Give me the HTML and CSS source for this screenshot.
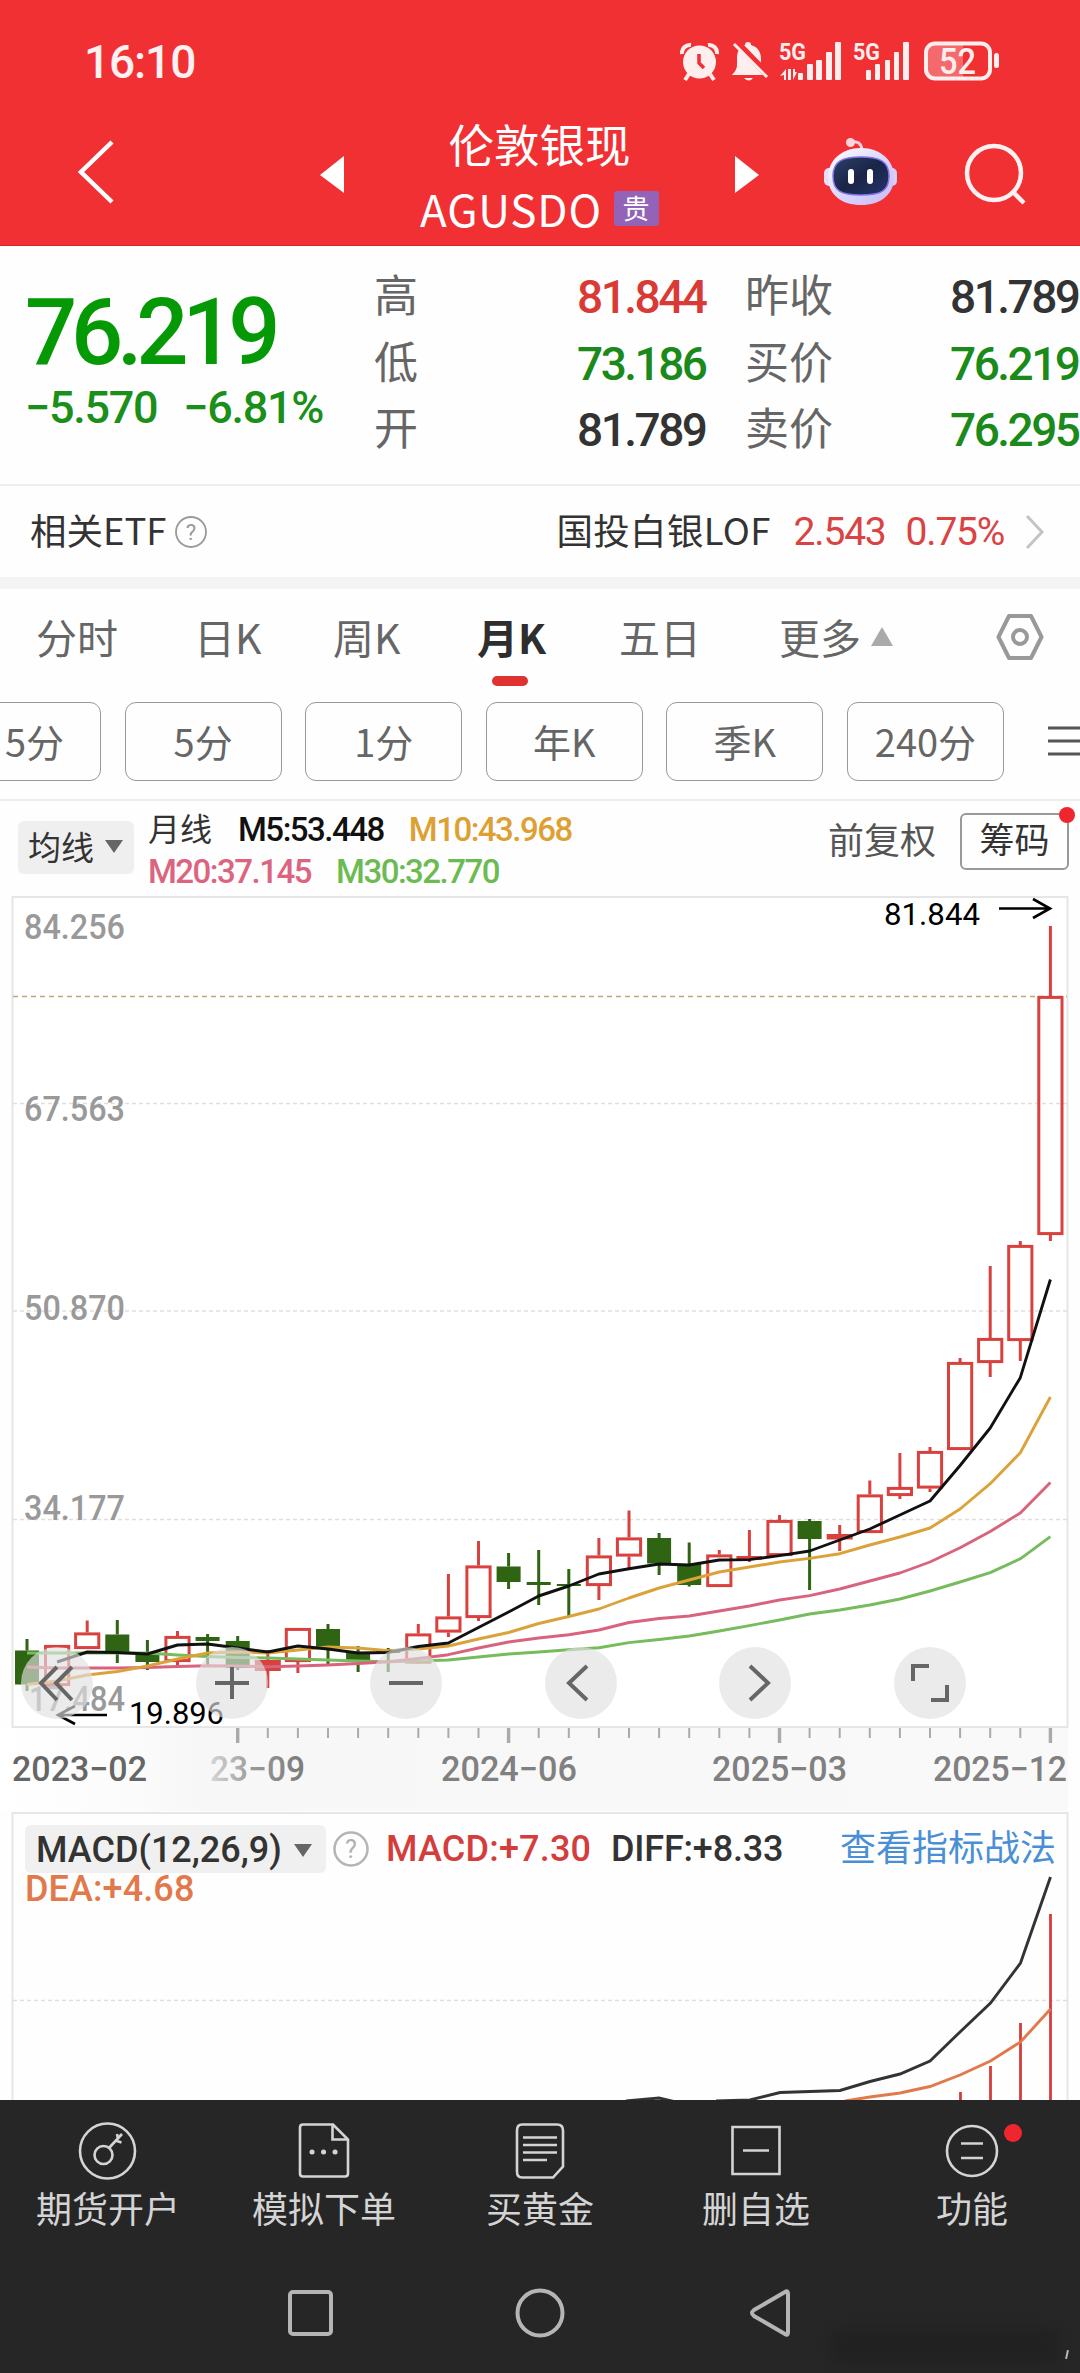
FILE: index.html
```html
<!DOCTYPE html>
<html lang="zh-CN">
<head>
<meta charset="utf-8">
<title>伦敦银现 AGUSDO</title>
<link rel="stylesheet" href="styles.css">
</head>
<body>
<main class="screen">
  <header class="header">
    <div class="status">
      <span class="status-time">16:10</span>
      <svg class="status-icons" width="344" height="60" viewBox="680 30 344 60">
        <g fill="#ffeeee">
          <circle cx="699.500" cy="62" r="16.500"/>
          <path d="M682 54a8 8 0 0 1 9-9M708 45a8 8 0 0 1 9 9" fill="none" stroke="#ffeeee" stroke-width="4"/>
          <path d="M689 74l-4 6M710 74l4 6" stroke="#ffeeee" stroke-width="4"/>
          <path d="M699 54v9l5 5" fill="none" stroke="#f13034" stroke-width="3.500"/>
          <path d="M748 42c2 0 3 1 3 3 7 2 10 7 10 14v7l5 9h-34c4-5 5-6 5-11v-6c0-7 3-11 8-13 0-2 1-3 3-3zM744 78h9q-4 5-9 0z"/>
          <path d="M736 42l32 33" stroke="#f13034" stroke-width="7"/>
          <path d="M734 44l33 33" stroke="#ffeeee" stroke-width="3"/>
          <path d="M780 76l6-7v11h-2v-5zM793 69v11l4-8h-2v-3zM788 69h3v11h-3z"/>
          <rect x="798" y="73" width="5" height="7" rx="1"/><rect x="807" y="64" width="6" height="16" rx="1"/><rect x="816" y="60" width="6" height="20" rx="1"/><rect x="826" y="52" width="6" height="28" rx="1"/><rect x="835" y="42" width="6" height="38" rx="1"/>
          <rect x="866" y="70" width="5" height="10" rx="1"/><rect x="875" y="64" width="5" height="16" rx="1"/><rect x="885" y="60" width="5" height="20" rx="1"/><rect x="894" y="52" width="5" height="28" rx="1"/><rect x="903" y="42" width="6" height="38" rx="1"/>
          <text x="779" y="60" class="sig" textLength="27" lengthAdjust="spacingAndGlyphs">5G</text>
          <text x="853" y="60" class="sig" textLength="27" lengthAdjust="spacingAndGlyphs">5G</text>
          <path d="M932 44h31v33h-31q-5 0-5-6V50q0-6 5-6z" opacity=".3"/>
          <rect x="926" y="43.500" width="64" height="35" rx="9" fill="none" stroke="#ffeeee" stroke-width="4"/>
          <rect x="994" y="53" width="5" height="15" rx="2.500"/>
          <text x="939" y="74" class="batt" textLength="37" lengthAdjust="spacingAndGlyphs">52</text>
        </g>
      </svg>
    </div>
    <div class="nav">
      <svg class="nav-back" width="40" height="68" viewBox="0 0 40 68"><path d="M36 4L5 34l31 30" fill="none" stroke="#fff" stroke-width="4.500"/></svg>
      <svg class="nav-prev" width="24" height="38" viewBox="0 0 24 38"><path d="M24 0v37L0 19z" fill="#fff"/></svg>
      <div class="title">
        <div class="title-name">伦敦银现</div>
        <div class="title-code"><span>AGUSDO</span><b class="badge">贵</b></div>
      </div>
      <svg class="nav-next" width="24" height="38" viewBox="0 0 24 38"><path d="M0 0v37l24-18z" fill="#fff"/></svg>
      <svg class="nav-bot" width="76" height="72" viewBox="823 136 76 72">
        <defs>
          <linearGradient id="shell" x1="0" y1="0" x2="1" y2="1"><stop offset="0" stop-color="#fff"/><stop offset=".55" stop-color="#d9d5ff"/><stop offset="1" stop-color="#c9b8f2"/></linearGradient>
          <linearGradient id="visor" x1="0" y1="0" x2="1" y2="1"><stop offset="0" stop-color="#2b4068"/><stop offset=".5" stop-color="#1a2547"/><stop offset="1" stop-color="#25346c"/></linearGradient>
        </defs>
        <path d="M851 142q10-2 11 8" fill="none" stroke="#f7cfe0" stroke-width="3"/>
        <circle cx="850.500" cy="142.500" r="4.500" fill="#f9d5e2"/>
        <rect x="824" y="168" width="12" height="18" rx="5" fill="#e8dcf8"/><rect x="885" y="168" width="12" height="18" rx="5" fill="#dccdf5"/>
        <path d="M861 148c20 0 33 13 33 29 0 18-14 28-33 28s-33-10-33-28c0-16 13-29 33-29z" fill="url(#shell)"/>
        <path d="M861 157c18 0 28 4 28 19s-8 19-28 19-28-4-28-19 10-19 28-19z" fill="url(#visor)" stroke="#7f73e6" stroke-width="1.500"/>
        <rect x="848" y="169" width="6" height="15" rx="3" fill="#fff"/><rect x="867" y="169" width="6" height="15" rx="3" fill="#fff"/>
      </svg>
      <svg class="nav-search" width="64" height="64" viewBox="963 142 64 64"><circle cx="994" cy="173" r="27" fill="none" stroke="#fff1f1" stroke-width="4.500"/><path d="M1013 192l11 11" stroke="#fff1f1" stroke-width="4.500"/></svg>
    </div>
  </header>

  <section class="quote">
    <div class="quote-main">
      <div class="price num">76.219</div>
      <div class="change num"><span>−5.570</span><span class="pct">−6.81%</span></div>
    </div>
    <dl class="stats left">
      <div><dt>高</dt><dd class="num up">81.844</dd></div>
      <div><dt>低</dt><dd class="num down">73.186</dd></div>
      <div><dt>开</dt><dd class="num">81.789</dd></div>
    </dl>
    <dl class="stats right">
      <div><dt>昨收</dt><dd class="num">81.789</dd></div>
      <div><dt>买价</dt><dd class="num down">76.219</dd></div>
      <div><dt>卖价</dt><dd class="num down">76.295</dd></div>
    </dl>
  </section>

  <section class="etf">
    <span>相关ETF</span>
    <svg class="etf-help" width="34" height="34" viewBox="0 0 34 34"><circle cx="17" cy="17" r="15" fill="none" stroke="#999" stroke-width="1.800"/><text x="17" y="24.500" text-anchor="middle" class="help-mark">?</text></svg>
    <span class="etf-name">国投白银LOF</span>
    <span class="etf-val num">2.543</span>
    <span class="etf-pct num">0.75%</span>
    <svg class="etf-go" width="20" height="36" viewBox="0 0 20 36"><path d="M2 2l15 16L2 34" fill="none" stroke="#c4c4c4" stroke-width="3"/></svg>
  </section>

  <nav class="tabs">
    <span class="tab t1">分时</span><span class="tab t2">日K</span><span class="tab t3">周K</span><span class="tab t4 active">月K</span><span class="tab t5">五日</span>
    <span class="tab t6">更多<svg width="22" height="19" viewBox="0 0 22 19"><path d="M11 0l11 19H0z" fill="#aaa"/></svg></span>
    <svg class="gear" width="52" height="50" viewBox="0 0 52 50"><path d="M15 4h22l10.500 21L37 46H15L4.500 25z" fill="none" stroke="#999" stroke-width="4" stroke-linejoin="round"/><circle cx="26" cy="25" r="7" fill="none" stroke="#999" stroke-width="4"/></svg>
  </nav>

  <div class="chips">
    <span class="chip first">5分</span><span class="chip">5分</span><span class="chip">1分</span><span class="chip">年K</span><span class="chip">季K</span><span class="chip">240分</span>
    <svg class="menu" width="33" height="34" viewBox="0 0 33 34"><path d="M0 4h33M0 17h33M0 30h33" stroke="#555" stroke-width="3"/></svg>
  </div>

  <section class="ma">
    <div class="ma-pick">均线<svg width="18" height="13" viewBox="0 0 18 13"><path d="M0 0h18L9 13z" fill="#666"/></svg></div>
    <div class="ma-list">
      <div class="ma-row"><span class="ma-title">月线</span><span class="num m5">M5:53.448</span><span class="num m10">M10:43.968</span></div>
      <div class="ma-row"><span class="num m20">M20:37.145</span><span class="num m30">M30:32.770</span></div>
    </div>
    <span class="adjust">前复权</span>
    <span class="chouma">筹码<i class="dot"></i></span>
  </section>

  <section class="chart">
    <svg id="kline" width="1080" height="915" viewBox="0 896 1080 915">
      <defs>
        <linearGradient id="axisbg"><stop offset="0" stop-color="#fff"/><stop offset=".13" stop-color="#fbfbfb"/><stop offset=".19" stop-color="#f7f7f7"/><stop offset="1" stop-color="#f9f9f9"/></linearGradient>
        <linearGradient id="fade" gradientUnits="userSpaceOnUse" x1="205" y1="0" x2="300" y2="0"><stop offset="0" stop-color="#ddd"/><stop offset=".5" stop-color="#999"/><stop offset="1" stop-color="#7d7d7d"/></linearGradient>
      </defs>
      <rect x="0" y="1728" width="1068" height="83" fill="url(#axisbg)"/>
      <rect x="12.500" y="897" width="1055" height="830" fill="#fff" stroke="#e6e6e6" stroke-width="2"/>
      <path d="M13 1103.500H1067M13 1311H1067M13 1519.500H1067" stroke="#dfdfdf" stroke-width="1.300" stroke-dasharray="4 3"/>
      <path d="M13 996.500H1067" stroke="#bfa77a" stroke-width="1.500" stroke-dasharray="5 4"/>
      <g class="ylab">
        <text x="24" y="938.500" textLength="101" lengthAdjust="spacingAndGlyphs">84.256</text>
        <text x="24" y="1120.500" textLength="101" lengthAdjust="spacingAndGlyphs">67.563</text>
        <text x="24" y="1320" textLength="101" lengthAdjust="spacingAndGlyphs">50.870</text>
        <text x="24" y="1520" textLength="101" lengthAdjust="spacingAndGlyphs">34.177</text>
        <text x="29" y="1710.500" textLength="96" lengthAdjust="spacingAndGlyphs">17.484</text>
      </g>
      <g id="candles"></g>
      <g id="lines" fill="none" stroke-width="2.900" stroke-linejoin="round"></g>
      <g class="mark">
        <text x="884" y="925" textLength="96" lengthAdjust="spacingAndGlyphs">81.844</text>
        <text x="129" y="1723.500" textLength="95" lengthAdjust="spacingAndGlyphs">19.896</text>
        <path d="M999 908.500H1050M1033 899l17 9.500-17 9.500M107 1715H58M75 1706l-17 9 17 9" fill="none" stroke="#000" stroke-width="2.600"/>
      </g>
      <g id="ticks" stroke="#aaa"></g>
      <g class="xlab">
        <text x="12" y="1781" textLength="135" lengthAdjust="spacingAndGlyphs" fill="#666">2023−02</text>
        <text x="210" y="1781" textLength="95" lengthAdjust="spacingAndGlyphs" fill="url(#fade)">23−09</text>
        <text x="441" y="1781" textLength="136" lengthAdjust="spacingAndGlyphs">2024−06</text>
        <text x="712" y="1781" textLength="135" lengthAdjust="spacingAndGlyphs">2025−03</text>
        <text x="933" y="1781" textLength="134" lengthAdjust="spacingAndGlyphs">2025−12</text>
      </g>
    </svg>
    <div class="tools">
      <svg viewBox="-36 -36 72 72"><path d="M0-16L-16 0 0 17M15-16L-1 0 15 17"/></svg>
      <svg viewBox="-36 -36 72 72"><path d="M-17 0H17M0-16V16"/></svg>
      <svg viewBox="-36 -36 72 72"><path d="M-17 0H17"/></svg>
      <svg viewBox="-36 -36 72 72"><path d="M6-17L-12 0 6 17"/></svg>
      <svg viewBox="-36 -36 72 72"><path d="M-5-17L13 0-5 17"/></svg>
      <svg viewBox="-36 -36 72 72"><path d="M-1-17H-17V-2M1 17H17V2"/></svg>
    </div>
  </section>

  <section class="macd">
    <svg class="macd-plot" width="1080" height="289" viewBox="0 1811 1080 289">
      <path d="M12.500 2101V1813H1067.500V2101" fill="none" stroke="#e6e6e6" stroke-width="2"/>
      <path d="M13 2000.500H1067" stroke="#dfdfdf" stroke-width="1.300" stroke-dasharray="4 3"/>
      <path d="M960.500 2092V2101M990.500 2066V2101M1020.500 2023V2101M1050.500 1914V2101" stroke="#d33e3c" stroke-width="2.800"/>
      <path d="M845 2101L870 2097 900 2093 930 2086.500 960 2075 990.500 2061 1020.500 2042 1050.500 2009" fill="none" stroke="#e2794a" stroke-width="2.900"/>
      <path d="M626 2101L659 2098 676 2102M716 2101L750 2100 780 2092.500 840 2090.500 870 2081.500 900 2074 930 2061 960 2032 990.500 2003 1020.500 1963 1050.500 1877" fill="none" stroke="#333" stroke-width="2.900"/>
    </svg>
    <div class="macd-head">
      <div class="macd-pick num"><span>MACD(12,26,9)</span><svg width="18" height="13" viewBox="0 0 18 13"><path d="M0 0h18L9 13z" fill="#666"/></svg></div>
      <svg class="macd-help" width="38" height="38" viewBox="0 0 38 38"><circle cx="19" cy="19" r="16.500" fill="none" stroke="#b5b5b5" stroke-width="2.500"/><text x="19" y="27.500" text-anchor="middle" class="help-mark big">?</text></svg>
      <span class="num macd-v">MACD:+7.30</span>
      <span class="num diff-v">DIFF:+8.33</span>
      <span class="macd-link">查看指标战法</span>
      <span class="num dea-v">DEA:+4.68</span>
    </div>
  </section>

  <footer class="footer">
    <div class="actions">
      <div class="action"><svg width="60" height="60" viewBox="78 2121 60 60"><circle cx="107.500" cy="2151" r="27.500"/><circle cx="103.500" cy="2155" r="9"/><path d="M109 2148l13-14M115.500 2140.500l6 2M117 2134l1 5"/></svg><span>期货开户</span></div>
      <div class="action"><svg width="60" height="60" viewBox="294 2121 60 60"><path d="M333 2124.500h-30q-3 0-3 3v46q0 3 3 3h42q3 0 3-3v-34zM332.500 2124v15.500H348"/><path d="M312 2152h.1M323.500 2152h.1M335 2152h.1" stroke-width="5" stroke-linecap="round"/></svg><span>模拟下单</span></div>
      <div class="action"><svg width="60" height="60" viewBox="510 2121 60 60"><path d="M522 2124.500h35q6 0 6 6v36l-10 11h-31q-5 0-5-6v-41q0-6 5-6zM523 2137.500h34M523 2145h34M523 2152.500h34M523 2160h24"/></svg><span>买黄金</span></div>
      <div class="action"><svg width="60" height="60" viewBox="725 2121 60 60"><path d="M731.500 2127h47v47h-47zM742 2150.500h26"/></svg><span>删自选</span></div>
      <div class="action"><svg width="60" height="60" viewBox="941 2121 60 60"><circle cx="971" cy="2151" r="25"/><path d="M960 2143.500h22M960 2158h22"/></svg><span>功能</span><i class="dot"></i></div>
    </div>
    <div class="sysnav">
      <svg width="50" height="54" viewBox="-25 -27 50 54"><rect x="-20" y="-21" width="41" height="42" rx="3"/></svg>
      <svg width="50" height="54" viewBox="-25 -27 50 54"><circle r="22.500"/></svg>
      <svg width="50" height="54" viewBox="-25 -27 50 54"><path d="M18-19v38q0 4-3 2L-16 3q-4-3 0-6L15-21q3-2 3 2z"/></svg>
      <i class="smudge"></i><i class="fleck"></i>
    </div>
  </footer>
</main>
<script src="chart.js"></script>
</body>
</html>
```

FILE: styles.css
```css
* { box-sizing: border-box; }
body {
  margin: 0;
  background: #fefefe;
  color: #333;
  font-family: Roboto, "Noto Sans CJK SC", sans-serif;
}
svg { display: block; flex: none; }
dl, dd { margin: 0; }
.screen { width: 1080px; height: 2373px; overflow: hidden; display: flex; flex-direction: column; }
.screen > * { flex: none; }
.num { font-family: Roboto, sans-serif; font-weight: 500; white-space: nowrap; }
.up { color: #d93a35; }
.down { color: #1a8a1a; }
.dot { position: absolute; border-radius: 50%; background: #f0262f; }

/* header */
.header { height: 246px; background: #f13034; color: #fff; border-bottom: 1px solid #d9262b; }
.status { height: 108px; padding: 30px 56px 0 84px; display: flex; justify-content: space-between; }
.status-time { margin-top: 10px; font-size: 46px; line-height: 44px; font-weight: 500; letter-spacing: -1.100px; color: #fff1f1; }
.sig { font: 700 24px Roboto, sans-serif; }
.batt { font: 500 36px Roboto, sans-serif; }
.nav { display: flex; padding-left: 76px; }
.nav-back { margin-top: 30px; }
.nav-prev { margin: 48px 0 0 204px; }
.title { width: 391px; display: flex; flex-direction: column; align-items: center; }
.title-name { margin-top: 9px; font: 400 45.500px/52px "Noto Sans CJK SC", sans-serif; }
.title-code { display: flex; align-items: center; gap: 12px; margin-top: 12px; font: 400 44px/54px "Noto Sans CJK SC", sans-serif; letter-spacing: .8px; }
.badge { width: 45px; height: 35px; border-radius: 3px; background: #9263b6; font-size: 27px; font-weight: 400; line-height: 34px; text-align: center; }
.nav-next { margin-top: 48px; }
.nav-bot { margin: 28px 0 0 64px; }
.nav-search { margin: 34px 0 0 64px; }

/* quote */
.quote { height: 240px; display: flex; border-bottom: 2px solid #eee; }
.quote-main { width: 374px; padding: 37px 0 0 25px; }
.price { font-size: 92px; line-height: 100px; letter-spacing: -6.300px; color: #059a05; }
.change { font-size: 45px; line-height: 50px; letter-spacing: -1.300px; color: #1a8f1a; display: flex; }
.pct { margin-left: 26px; }
.stats { padding-top: 18px; font-size: 44px; color: #666; }
.stats > div { display: flex; justify-content: space-between; height: 66.500px; line-height: 66px; }
.stats dd { font-size: 46px; letter-spacing: -2.500px; margin-right: .5px; }
.stats dd:not(.up):not(.down) { color: #333; }
.stats.left { width: 332px; }
.stats.right { width: 334px; margin-left: 39px; }

/* related fund */
.etf { height: 103px; padding: 0 0 4px 30px; display: flex; align-items: center; font-size: 36.500px; line-height: 50px; border-bottom: 12px solid #f4f4f4; font-family: "Noto Sans CJK SC", sans-serif; }
.etf > span { white-space: nowrap; }
.etf > svg, .etf > .num { position: relative; top: 2px; }
.etf-help { margin-left: 7px; }
.help-mark { font: 400 22px Roboto, sans-serif; fill: #999; }
.help-mark.big { font-size: 25px; fill: #b0b0b0; }
.etf-name { margin-left: 349px; letter-spacing: .3px; }
.etf-val, .etf-pct { color: #d94343; font-size: 39px; letter-spacing: -1.200px; font-weight: 400; }
.etf-val { margin-left: 23px; }
.etf-pct { margin-left: 20px; }
.etf-go { margin-left: 21px; }

/* period tabs */
.tabs { height: 113px; padding: 17px 0 0 36px; display: flex; align-items: flex-start; font-size: 41px; line-height: 60px; color: #666; font-family: "Noto Sans CJK SC", sans-serif; }
.tab { flex: none; position: relative; white-space: nowrap; }
.t1 { width: 158px; } .t2 { width: 139px; } .t3 { width: 144px; } .t4 { width: 142px; } .t5 { width: 160px; }
.t6 { width: 215px; display: flex; align-items: center; gap: 10px; }
.active { color: #2e2e2e; font-weight: 700; }
.active::after { content: ""; position: absolute; left: 15px; top: 70px; width: 36px; height: 10px; border-radius: 5px; background: #e03331; }
.gear { margin-top: 6px; }

/* period chips */
.chips { height: 99px; display: flex; gap: 23.600px; margin-left: -56px; padding-bottom: 20px; border-bottom: 2px solid #eee; }
.chip { flex: none; width: 157px; height: 79px; border: 1.500px solid #999; border-radius: 11px; text-align: center; font: 400 38px/76px "Noto Sans CJK SC", sans-serif; color: #666; }
.chip.first { text-align: right; padding-right: 36px; }
.menu { margin: 22px 0 0 20px; }

/* moving averages */
.ma { height: 95px; display: flex; padding-left: 18px; }
.ma-pick { flex: none; margin-top: 20px; width: 116px; height: 53px; border-radius: 6px; background: #efefef; display: flex; align-items: center; gap: 11px; padding: 0 0 3px 10px; font-size: 33px; }
.ma-list { flex: none; width: 500px; padding: 8px 0 0 14px; font-size: 33px; letter-spacing: -1.500px; }
.ma-row { height: 41.500px; line-height: 42px; display: flex; gap: 25px; }
.ma-title { letter-spacing: 0; font-size: 32px; margin-right: 1px; }
.m5 { color: #111; } .m10 { color: #dda033; } .m20 { color: #dc6480; } .m30 { color: #6cbb52; }
.adjust { flex: none; margin: 16px 0 0 194px; width: 132px; font-size: 36px; line-height: 50px; color: #555; }
.chouma { flex: none; position: relative; margin-top: 12px; width: 109px; height: 57px; border: 2px solid #999; border-radius: 6px; font-size: 35px; line-height: 53px; text-align: center; }
.chouma .dot { right: -8px; top: -8px; width: 16px; height: 16px; }

/* candlestick chart */
.chart { position: relative; height: 915px; }
.ylab text { font: 500 34.500px Roboto, sans-serif; fill: #999; }
.xlab text { font: 500 34.500px Roboto, sans-serif; }
.xlab { fill: #808080; }
.mark text { font: 400 31px Roboto, sans-serif; fill: #000; }
.tools { position: absolute; left: 21px; top: 751px; display: flex; gap: 102.500px; }
.tools svg { width: 72px; height: 72px; border-radius: 50%; background: rgba(225, 225, 225, .65); fill: none; stroke: #666; stroke-width: 4; }

/* indicator */
.macd { height: 289px; display: grid; overflow: hidden; }
.macd-plot, .macd-head { grid-area: 1 / 1; }
.macd-head { display: flex; flex-wrap: wrap; align-content: flex-start; align-items: center; padding: 13px 0 0 25px; font-size: 36px; line-height: 50px; }
.macd-pick { position: relative; width: 301px; height: 48px; border-radius: 6px; background: #f0f0f0; display: flex; align-items: center; justify-content: space-between; padding: 2px 14px 0 11px; }
.macd-help { margin-left: 6px; }
.macd-v { margin-left: 16px; width: 225px; color: #d33e3c; letter-spacing: .2px; }
.diff-v { width: 229px; letter-spacing: -.2px; }
.macd-link { color: #4a8fd6; font-size: 36px; }
.dea-v { width: 100%; margin-top: -10px; color: #e2794a; letter-spacing: .1px; }

/* bottom bars */
.footer { height: 273px; background: #262626; color: #d4d4d4; }
.actions { display: flex; height: 160px; padding-top: 21px; }
.action { position: relative; width: 216px; display: flex; flex-direction: column; align-items: center; font: 400 36px/52px "Noto Sans CJK SC", sans-serif; }
.action svg { fill: none; stroke: #d4d4d4; stroke-width: 2.600; }
.action .dot { left: 140px; top: 3px; width: 18px; height: 18px; }
.sysnav { position: relative; display: flex; justify-content: center; gap: 180px; padding-top: 26px; }
.sysnav svg { fill: none; stroke: #b5b5b5; stroke-width: 4; }
.smudge { position: absolute; left: 830px; top: 68px; width: 230px; height: 36px; border-radius: 12px; background: #1f1f1f; filter: blur(6px); opacity: .6; }
.fleck { position: absolute; left: 1066px; top: 90px; width: 2px; height: 9px; background: #bbb; transform: rotate(12deg); }
```

FILE: chart.js
```js
const NS = "http://www.w3.org/2000/svg";
const RED = "#d8413e", GREEN = "#2f6412";
const x = i => 27 + i * 30.1;

function add(parent, tag, attrs) {
  const el = document.createElementNS(NS, tag);
  for (const k in attrs) el.setAttribute(k, attrs[k]);
  document.getElementById(parent).appendChild(el);
}

// kind (r = hollow rise, f = filled rise, g = fall), body top, body bottom, high, low
const candles = [
  ["g",1650.5,1684.5,1639,1691],["r",1645,1686,1645,1686],["r",1632.5,1649,1620.5,1649],["g",1634.5,1652,1620,1663],
  ["g",1654,1662,1640,1670],["r",1636,1662,1631,1665],["g",1637,1641,1634,1667],["g",1641,1668,1636,1670],
  ["f",1660,1671,1650,1688],["r",1628,1662,1628,1673],["g",1629,1648,1624,1664],["g",1652,1661,1646,1672],
  ["g",1650,1653,1648,1672],["r",1633.5,1663.5,1624,1663],["r",1616.5,1632.5,1574,1637],["r",1565.5,1618,1541,1621],
  ["g",1566.5,1582,1553,1589],["g",1582,1585,1550,1605],["g",1584,1586,1569,1616],["r",1555.5,1586,1538,1600],
  ["r",1537.5,1556.5,1510.5,1569.5],["g",1538,1563.5,1533,1575],["g",1564,1585,1542.5,1586.5],["r",1554.5,1587,1550,1587],
  ["f",1556,1560,1530,1562],["r",1520,1556,1515,1556],["g",1521,1539,1519,1590],["f",1534,1539.5,1525,1551],
  ["r",1494.5,1533,1480.5,1533],["r",1487,1496,1453,1499],["r",1451,1488.5,1447,1492],["r",1362,1450,1358,1450],
  ["r",1338,1363,1266,1377],["r",1245,1341,1241,1361],["r",996,1235,926,1241]
];
candles.forEach(([kind, top, bottom, high, low], i) => {
  const color = kind === "g" ? GREEN : RED, w = kind === "g" ? 24 : 26;
  add("candles", "path", { d: `M${x(i)} ${high}V${top}M${x(i)} ${bottom}V${low}`, stroke: color, "stroke-width": 3 });
  if (kind === "r") {
    add("candles", "rect", { x: x(i) - 11.6, y: top + 1.4, width: 23.2, height: bottom - top - 2.8, fill: "none", stroke: color, "stroke-width": 3 });
  } else {
    add("candles", "rect", { x: x(i) - w / 2, y: top, width: w, height: bottom - top, fill: color });
  }
});

const averages = {
  "#76bb5c": [1653,1653,1653,1653,1653,1655,1656.5,1657.5,1658,1659,1660,1661,1661.7,1661,1660,1657,1654,1652,1649.8,1647.8,1642.6,1639.5,1636,1631,1625.6,1620,1614,1610,1605,1599,1591,1582,1572.6,1558.8,1536.7],
  "#d9637c": [1667,1668,1668,1668,1667.5,1666.5,1665.7,1666,1666.7,1666,1665,1663.5,1661.7,1658.5,1654.7,1648,1642,1638,1634.7,1630,1622.5,1618.5,1616,1611,1606,1600,1595.6,1589,1581,1573,1562,1547.7,1531.5,1513,1482.5],
  "#dba23a": [1684.5,1681,1675,1671.5,1666,1659,1653,1652,1653,1650,1647,1648,1650.7,1649,1646,1639,1632.5,1623.5,1616.5,1609,1598,1588,1580,1572,1567,1562,1558.4,1553.7,1545,1537,1528,1509,1483.7,1452.8,1397],
  "#111": [null,1662,1652,1652.5,1654,1645,1644,1648,1652,1646,1649,1653,1652.5,1646.5,1643,1627.5,1612,1596,1586,1574,1568.7,1564,1565,1560,1559.6,1555.6,1551,1540,1529,1515,1501,1465.5,1428,1377.7,1279.5]
};
for (const color in averages) {
  const pts = averages[color].map((y, i) => y === null ? "" : `${x(i)},${y}`).join(" ").trim();
  add("lines", "polyline", { points: pts, stroke: color });
}

for (let i = 7; i < 35; i++) {
  const major = (i - 7) % 9 === 0;
  add("ticks", "path", { d: `M${x(i)} 1728v${major ? 15 : 10}`, "stroke-width": major ? 3.4 : 2 });
}
```
